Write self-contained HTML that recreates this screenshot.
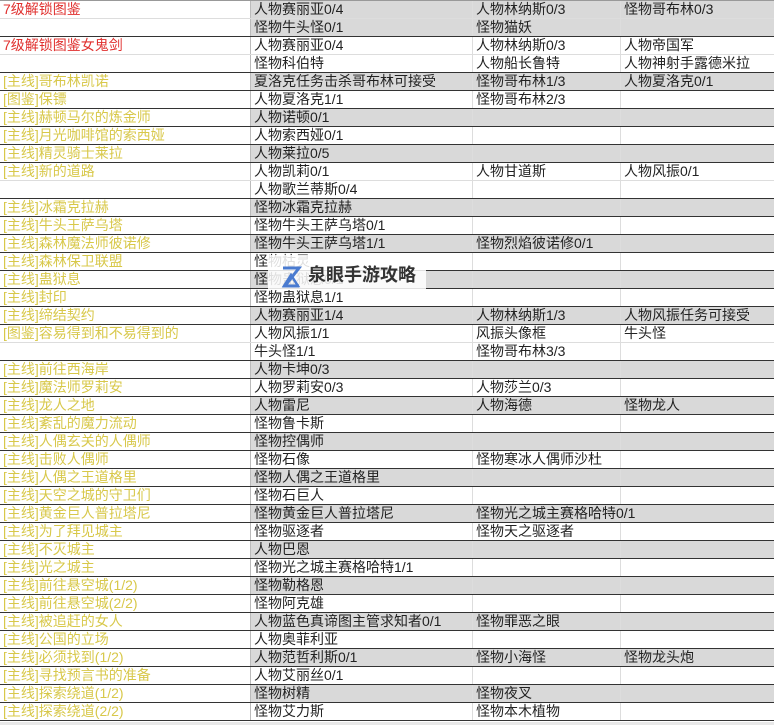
<!DOCTYPE html>
<html><head><meta charset="utf-8"><style>
body{margin:0;width:774px;height:725px;overflow:hidden;background:#fff;font-family:"Liberation Sans","Noto Sans CJK SC",sans-serif;font-size:14px;color:#222;position:relative}
.r{position:absolute;left:0;width:774px;height:18px;line-height:17px;border-bottom:1px solid #ddd;box-sizing:border-box}
.r.e{border-bottom:1.5px solid #333}
.c{position:absolute;top:0;height:16.5px;white-space:nowrap;overflow:hidden;padding-left:3px;box-sizing:border-box}
.a{left:0;width:250px;color:#d8c84a}
.a.red{color:#e0302e}
.b{left:250px;width:222px;border-left:1px solid #bbb}
.cc{left:472px;width:148px;border-left:1px solid #ddd;overflow:visible}
.d{left:620px;width:154px;border-left:1px solid #ddd}
.g .b,.g .cc,.g .d{background:#d9d9d9}
.wm{position:absolute;left:268px;top:255px;width:158px;height:35px;background:rgba(255,255,255,0.85);}
.wm span{position:absolute;left:40px;top:6px;font-size:18px;font-weight:bold;color:#333}
</style></head><body>
<div style="position:absolute;left:0;top:0;width:774px;height:1px;background:#999"></div>
<div id="t"></div>
<script>
var rows=[
[1,0,'7级解锁图鉴','人物赛丽亚0/4','人物林纳斯0/3','怪物哥布林0/3'],
[1,1,'','怪物牛头怪0/1','怪物猫妖',''],
[0,0,'7级解锁图鉴女鬼剑','人物赛丽亚0/4','人物林纳斯0/3','人物帝国军'],
[0,1,'','怪物科伯特','人物船长鲁特','人物神射手露德米拉'],
[1,1,'[主线]哥布林凯诺','夏洛克任务击杀哥布林可接受','怪物哥布林1/3','人物夏洛克0/1'],
[0,1,'[图鉴]保镖','人物夏洛克1/1','怪物哥布林2/3',''],
[1,1,'[主线]赫顿马尔的炼金师','人物诺顿0/1','',''],
[0,1,'[主线]月光咖啡馆的索西娅','人物索西娅0/1','',''],
[1,1,'[主线]精灵骑士莱拉','人物莱拉0/5','',''],
[0,0,'[主线]新的道路','人物凯莉0/1','人物甘道斯','人物风振0/1'],
[0,1,'','人物歌兰蒂斯0/4','',''],
[1,1,'[主线]冰霜克拉赫','怪物冰霜克拉赫','',''],
[0,1,'[主线]牛头王萨乌塔','怪物牛头王萨乌塔0/1','',''],
[1,1,'[主线]森林魔法师彼诺修','怪物牛头王萨乌塔1/1','怪物烈焰彼诺修0/1',''],
[0,1,'[主线]森林保卫联盟','怪物枯灵','',''],
[1,1,'[主线]蛊狱息','怪物蛊狱息0/1','',''],
[0,1,'[主线]封印','怪物蛊狱息1/1','',''],
[1,1,'[主线]缔结契约','人物赛丽亚1/4','人物林纳斯1/3','人物风振任务可接受'],
[0,0,'[图鉴]容易得到和不易得到的','人物风振1/1','风振头像框','牛头怪'],
[0,1,'','牛头怪1/1','怪物哥布林3/3',''],
[1,1,'[主线]前往西海岸','人物卡坤0/3','',''],
[0,1,'[主线]魔法师罗莉安','人物罗莉安0/3','人物莎兰0/3',''],
[1,1,'[主线]龙人之地','人物雷尼','人物海德','怪物龙人'],
[0,1,'[主线]紊乱的魔力流动','怪物鲁卡斯','',''],
[1,1,'[主线]人偶玄关的人偶师','怪物控偶师','',''],
[0,1,'[主线]击败人偶师','怪物石像','怪物寒冰人偶师沙杜',''],
[1,1,'[主线]人偶之王道格里','怪物人偶之王道格里','',''],
[0,1,'[主线]天空之城的守卫们','怪物石巨人','',''],
[1,1,'[主线]黄金巨人普拉塔尼','怪物黄金巨人普拉塔尼','怪物光之城主赛格哈特0/1',''],
[0,1,'[主线]为了拜见城主','怪物驱逐者','怪物天之驱逐者',''],
[1,1,'[主线]不灭城主','人物巴恩','',''],
[0,1,'[主线]光之城主','怪物光之城主赛格哈特1/1','',''],
[1,1,'[主线]前往悬空城(1/2)','怪物勒格恩','',''],
[0,1,'[主线]前往悬空城(2/2)','怪物阿克雄','',''],
[1,1,'[主线]被追赶的女人','人物蓝色真谛图主管求知者0/1','怪物罪恶之眼',''],
[0,1,'[主线]公国的立场','人物奥菲利亚','',''],
[1,1,'[主线]必须找到(1/2)','人物范哲利斯0/1','怪物小海怪','怪物龙头炮'],
[0,1,'[主线]寻找预言书的准备','人物艾丽丝0/1','',''],
[1,1,'[主线]探索绕道(1/2)','怪物树精','怪物夜叉',''],
[0,1,'[主线]探索绕道(2/2)','怪物艾力斯','怪物本木植物','']
];
var h='';
rows.forEach(function(r,i){
 var cls='r'+(r[0]?' g':'')+(r[1]?' e':'');
 var red=i<4?' red':'';
 h+='<div class="'+cls+'" style="top:'+(1+i*18)+'px"><div class="c a'+red+'">'+r[2]+'</div><div class="c b">'+r[3]+'</div><div class="c d">'+r[5]+'</div><div class="c cc">'+r[4]+'</div></div>';
});
document.getElementById('t').innerHTML=h;
</script>
<div style="position:absolute;left:0;top:722px;width:774px;height:3px;background:#e8e8e8"></div>
<div class="wm">
<svg style="position:absolute;left:12px;top:11px" width="22" height="22" viewBox="0 0 22 22"><path d="M3 2 L19 2 L5 20 L19 20" fill="none" stroke="#4a7bd0" stroke-width="3"/><path d="M11 9 L18 20 L4 20 Z" fill="none" stroke="#4a7bd0" stroke-width="2.5"/></svg>
<span>泉眼手游攻略</span></div>
</body></html>
